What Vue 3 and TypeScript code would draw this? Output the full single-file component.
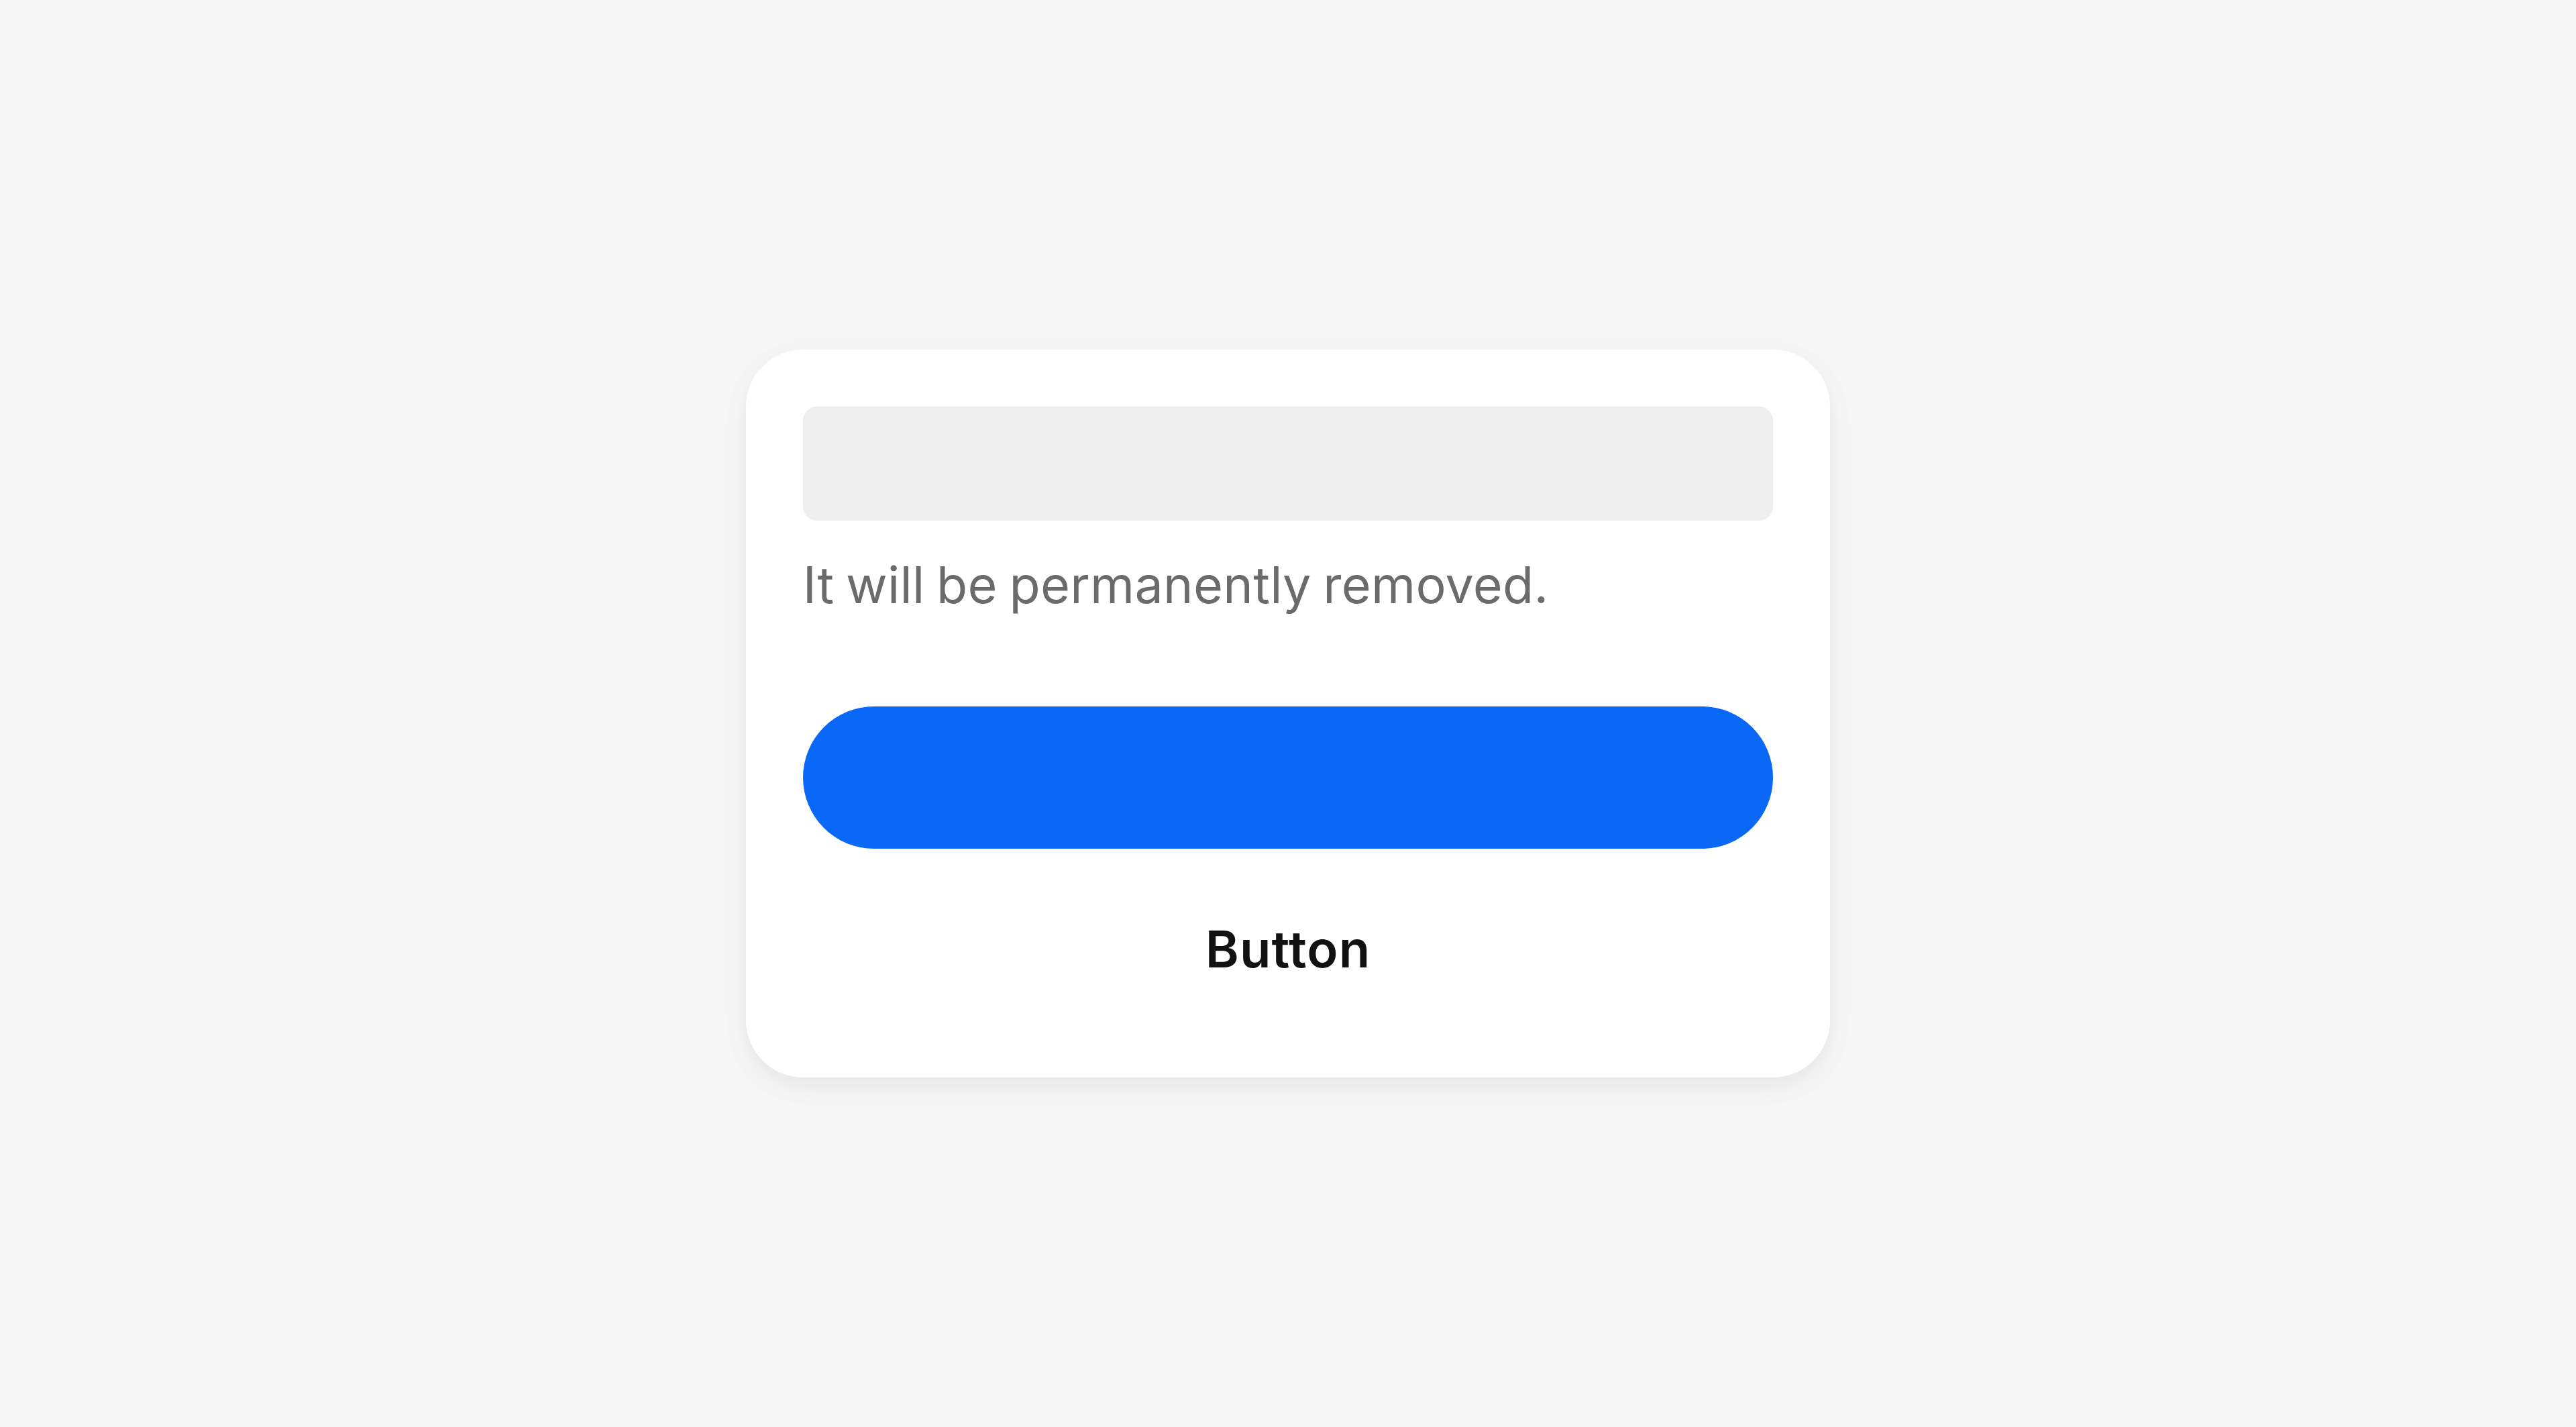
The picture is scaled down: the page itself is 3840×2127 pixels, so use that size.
<script setup lang="ts">
const message: string = 'It will be permanently removed.'
const secondaryLabel: string = 'Button'
</script>

<template>
  <main class="stage">
    <section class="card" role="dialog" aria-live="polite">
      <div class="title-placeholder"></div>
      <p class="message">{{ message }}</p>
      <button class="primary" type="button"></button>
      <button class="secondary" type="button"><span class="label">{{ secondaryLabel }}</span></button>
    </section>
  </main>
</template>

<style>
body {
  margin: 0;
  background: #f7f7f7;
}
</style>

<style scoped>
.stage {
  display: flex;
  justify-content: center;
  align-items: flex-start;
  box-sizing: border-box;
  width: 100%;
  height: 2127px;
  padding-top: 520.5px;
  background: #f7f7f7;
  font-family: Inter, "Liberation Sans", sans-serif;
}

.card {
  display: flex;
  flex-direction: column;
  box-sizing: border-box;
  width: 1616.5px;
  height: 1085.5px;
  padding: 85.5px 85px;
  border-radius: 85px;
  background: #fff;
  box-shadow: 0 14px 36px rgba(0, 0, 0, 0.06), 0 11px 80px rgba(0, 0, 0, 0.02);
}

.title-placeholder {
  height: 170px;
  border-radius: 21px;
  background: #eee;
}

.message {
  height: 106px;
  margin: 42.5px 0 0.5px;
  color: #6b6b6b;
  font-size: 75.5px;
  font-weight: 430;
  line-height: 106px;
  letter-spacing: 0.27px;
  word-spacing: -4px;
  white-space: nowrap;
}

.primary,
.secondary {
  display: block;
  width: 100%;
  height: 212px;
  padding: 0;
  border: 0;
  border-radius: 106px;
  font-family: inherit;
}

.primary {
  margin-top: 128px;
  background: #0968f6;
}

.secondary {
  margin-top: 42.5px;
  background: transparent;
  color: #111;
  font-size: 76px;
  font-weight: 640;
  line-height: 212px;
  letter-spacing: 1.1px;
}
</style>
